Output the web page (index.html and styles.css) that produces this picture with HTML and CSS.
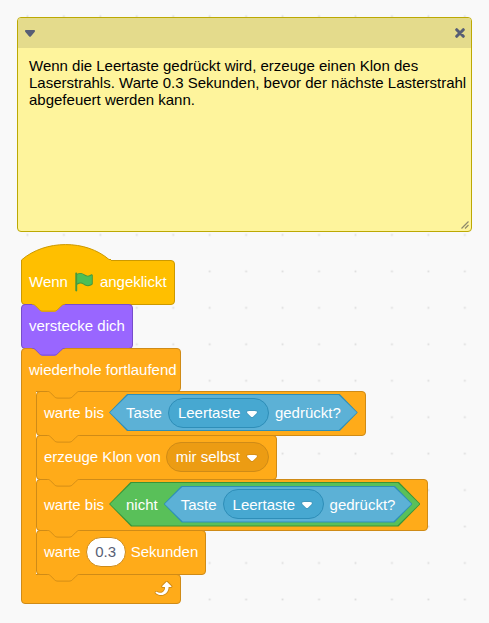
FILE: index.html
```html
<!DOCTYPE html>
<html lang="de">
<head>
<meta charset="utf-8">
<meta name="viewport" content="width=device-width, initial-scale=1">
<title>Laserstrahl</title>
<link rel="stylesheet" href="styles.css">
</head>
<body>
<svg class="grid-dots" aria-hidden="true">
  <defs>
    <pattern id="dots" width="40" height="40" patternUnits="userSpaceOnUse" patternTransform="translate(9.2 -2) scale(.9113)">
      <rect x="19" y="19" width="2" height="2" fill="#ddd"/>
    </pattern>
  </defs>
  <rect width="100%" height="100%" fill="url(#dots)"/>
</svg>
<svg class="defs" aria-hidden="true">
  <symbol id="notch" viewBox="0 0 36 10">
    <path class="notch-fill" d="M0 0v.6c2 0 3 1 4 2l4 4c1 1 2 2 4 2h12c2 0 3-1 4-2l4-4c1-1 2-2 4-2v-.6z"/>
    <path class="notch-line" d="M0 .4c2 0 3 1 4 2l4 4c1 1 2 1.500 4 1.500h12c2 0 3-.5 4-1.500l4-4c1-1 2-2 4-2"/>
  </symbol>
  <symbol id="caret" viewBox="0 0 12.71 8.79">
    <path d="M12.71 2.44A2.41 2.41 0 0 1 12 4.16L8.08 8.08a2.45 2.45 0 0 1-3.45 0L.72 4.16A2.42 2.42 0 0 1 0 2.44 2.48 2.48 0 0 1 .71.71C1 .47 1.43 0 6.36 0S11.75.46 12 .71A2.44 2.44 0 0 1 12.71 2.44Z" fill="#231f20" opacity=".1"/>
    <path d="M6.36 7.79a1.43 1.43 0 0 1-1-.42L1.42 3.45a1.44 1.44 0 0 1 0-2c.56-.56 9.31-.56 9.87 0a1.44 1.44 0 0 1 0 2L7.37 7.37A1.43 1.43 0 0 1 6.36 7.79Z" fill="#fff"/>
  </symbol>
</svg>
<main class="workspace">
  <section class="note">
    <header class="note-bar">
      <button class="note-button" type="button" aria-label="Kommentar einklappen">
        <svg width="10" height="7" viewBox="0 0 10 7"><path d="M1 0h8c1 0 1.300 1.200.6 1.900L6 6.200c-.6.700-1.400.700-2 0L.4 1.900C-.3 1.200 0 0 1 0z" fill="#575e75"/></svg>
      </button>
      <button class="note-button" type="button" aria-label="Kommentar löschen">
        <svg width="10" height="10" viewBox="0 0 10 10"><path d="M1.700 1.700l6.600 6.600M8.300 1.700L1.700 8.300" stroke="#575e75" stroke-width="3" stroke-linecap="round"/></svg>
      </button>
    </header>
    <textarea class="note-text" aria-label="Kommentar" spellcheck="false">Wenn die Leertaste gedrückt wird, erzeuge einen Klon des Laserstrahls. Warte 0.3 Sekunden, bevor der nächste Lasterstrahl abgefeuert werden kann.</textarea>
    <svg class="note-grip" width="8" height="8" viewBox="0 0 8 8" aria-hidden="true"><path d="M.5 7.500l7-7M4 7.500L7.500 4" stroke="#8f8a6a" stroke-width="1.200"/></svg>
  </section>

  <section class="script">
    <div class="hat">
      <svg class="hat-dome" width="90" height="17" viewBox="0 0 90 17" aria-hidden="true"><path d="M.5 17v-1C24-4.500 65-4.500 88 15.500h2V17z" fill="#ffbf00"/><path d="M.5 17v-1C24-4.500 65-4.500 88 15.500h2" fill="none" stroke="#c90"/></svg>
      <div class="block events">
        <span>Wenn</span>
        <svg class="flag" width="22" height="22" viewBox="0 0 24 24" role="img" aria-label="grüne Flagge">
          <path fill="#45993d" d="M20.800 3.700c-.4-.2-.9-.1-1.200.2-2 1.600-4.800 1.600-6.800 0-2.300-1.900-5.600-2.300-8.300-1v-.4c0-.6-.5-1-1-1s-1 .4-1 1v18.800c0 .5.5 1 1 1h.1c.5 0 1-.4 1-1v-6.400c1-.7 2.100-1.200 3.400-1.300 1.200 0 2.400.4 3.400 1.200 2.900 2.300 7 2.300 9.800 0 .3-.2.4-.5.4-.9V4.700c0-.5-.3-.9-.8-1z"/>
          <path fill="#4cbf56" d="M20.600 4.800l-.1 9.100v.1c-2.500 2-6.100 2-8.600 0-1.100-.9-2.500-1.400-4-1.400-1.200.1-2.300.5-3.400 1.100V4c2.500-1.400 5.500-1.100 7.700.6 2.400 1.900 5.700 1.900 8.100 0h.2c0 .1.100.1.100.2z"/>
        </svg>
        <span>angeklickt</span>
        <svg class="notch" aria-hidden="true"><use href="#notch"/></svg>
      </div>
    </div>

    <div class="block looks">
      <span>verstecke dich</span>
      <svg class="notch" aria-hidden="true"><use href="#notch"/></svg>
    </div>

    <div class="loop">
      <div class="block control loop-head"><span>wiederhole fortlaufend</span></div>
      <div class="loop-body">
        <div class="loop-arm"></div>
        <div class="loop-blocks">
          <div class="block control">
            <span>warte bis</span>
            <div class="hex sensing">
              <label for="key1">Taste</label>
              <span class="pick"><select id="key1"><option>Leertaste</option></select><svg class="caret" aria-hidden="true"><use href="#caret"/></svg></span>
              <span>gedrückt?</span>
            </div>
            <svg class="notch" aria-hidden="true"><use href="#notch"/></svg>
          </div>
          <div class="block control">
            <label for="clone">erzeuge Klon von</label>
            <span class="pick"><select id="clone"><option>mir selbst</option></select><svg class="caret" aria-hidden="true"><use href="#caret"/></svg></span>
            <svg class="notch" aria-hidden="true"><use href="#notch"/></svg>
          </div>
          <div class="block control tall">
            <span>warte bis</span>
            <div class="hex operators">
              <span>nicht</span>
              <div class="hex sensing">
                <label for="key2">Taste</label>
                <span class="pick"><select id="key2"><option>Leertaste</option></select><svg class="caret" aria-hidden="true"><use href="#caret"/></svg></span>
                <span>gedrückt?</span>
              </div>
            </div>
            <svg class="notch" aria-hidden="true"><use href="#notch"/></svg>
          </div>
          <div class="block control">
            <label for="secs">warte</label>
            <input class="number" id="secs" type="text" value="0.3">
            <span>Sekunden</span>
            <svg class="notch" aria-hidden="true"><use href="#notch"/></svg>
          </div>
          <svg class="notch top-notch control" aria-hidden="true"><use href="#notch"/></svg>
        </div>
      </div>
      <div class="block control loop-foot">
        <svg width="22" height="22" viewBox="0 0 24 24" aria-hidden="true">
          <path fill="#cf8b17" d="M23.300 11c-.3.6-.9 1-1.500 1h-1.600c-.1 1.300-.5 2.500-1.100 3.600-.9 1.700-2.300 3.200-4.100 4.100-1.700.9-3.600 1.200-5.500.9-1.800-.3-3.500-1.100-4.900-2.300-.7-.7-.7-1.900 0-2.600.6-.6 1.600-.7 2.300-.2H7c.9.6 1.900.9 2.900.9s1.900-.3 2.700-.9c1.100-.8 1.800-2.100 1.800-3.500h-1.500c-.9 0-1.700-.7-1.700-1.700 0-.4.2-.9.5-1.200l4.400-4.400c.7-.6 1.700-.6 2.400 0L23 9.200c.5.5.6 1.200.3 1.800z"/>
          <path fill="#fff" d="M21.800 11h-2.600c0 1.500-.3 2.900-1 4.200-.8 1.600-2.100 2.800-3.700 3.600-1.500.8-3.300 1.100-4.900.8-1.600-.2-3.200-1-4.400-2.100-.4-.3-.4-.9-.1-1.200.3-.4.9-.4 1.200-.1 1 .7 2.200 1.100 3.400 1.100s2.300-.3 3.300-1c.9-.6 1.600-1.500 2-2.600.3-.9.4-1.800.2-2.800h-2.400c-.4 0-.7-.3-.7-.7 0-.2.1-.3.2-.4l4.400-4.400c.3-.3.7-.3.9 0L22 9.800c.3.3.4.6.3.9s-.3.3-.5.3z"/>
        </svg>
      </div>
    </div>
  </section>
</main>
</body>
</html>
```
FILE: styles.css
```css
* {
  box-sizing: border-box;
}

body {
  margin: 0;
  min-height: 100vh;
  background: #f9f9f9;
  color: #fff;
  font: 15px/17px "Liberation Sans", Arial, sans-serif;
}

input,
select,
textarea,
button {
  margin: 0;
  font: inherit;
}

.grid-dots {
  position: absolute;
  inset: 0;
  width: 100%;
  height: 100%;
}

.defs {
  position: absolute;
  width: 0;
  height: 0;
}

.workspace {
  position: relative;
  padding: 17px 17px 20px;
}

/* Comment */
.note {
  position: relative;
  display: flex;
  flex-direction: column;
  height: 215px;
  overflow: hidden;
  border: 1px solid #bca903;
  border-radius: 4px;
  background: #fef49c;
}

.note-bar {
  display: flex;
  justify-content: space-between;
  align-items: center;
  height: 30px;
  padding: 0 5px 0 6px;
  background: #e4db8c;
}

.note-button {
  display: grid;
  place-items: center;
  width: 12px;
  height: 16px;
  padding: 0;
  border: 0;
  background: none;
}

.note-text {
  flex: 1;
  padding: 9px 0 9px 11px;
  border: 0;
  outline: 0;
  resize: none;
  overflow: hidden;
  background: none;
  color: #000;
}

.note-grip {
  position: absolute;
  right: 2px;
  bottom: 2px;
}

/* Blocks */
.script {
  display: flex;
  flex-direction: column;
  align-items: flex-start;
  margin: 12px 4px 0;
}

.hat {
  display: flex;
  flex-direction: column;
  align-items: flex-start;
}

.hat-dome {
  position: relative;
  z-index: 1;
  margin-bottom: -1px;
}

.hat .block {
  border-top-left-radius: 0;
}

.events {
  --fill: #ffbf00;
  --line: #c90;
}

.looks {
  --fill: #96f;
  --line: #774dcb;
}

.control {
  --fill: #ffab19;
  --line: #cf8b17;
  --field: #ec9c13;
}

.sensing {
  --fill: #5cb1d6;
  --line: #2e8eb8;
  --field: #47a8d1;
}

.operators {
  --fill: #59c059;
  --line: #389438;
}

.block {
  position: relative;
  display: flex;
  align-items: center;
  gap: 5px;
  width: max-content;
  height: 45px;
  padding: 0 7px 2px;
  border: 1px solid var(--line);
  border-radius: 4px;
  background: var(--fill);
  white-space: nowrap;
}

.tall {
  height: 52px;
}

.looks,
.loop,
.loop-blocks .block + .block {
  margin-top: -1px;
}

.notch {
  position: absolute;
  z-index: 2;
  top: 100%;
  left: 10px;
  width: 33px;
  height: 9px;
}

.top-notch {
  top: 0;
  left: 26px;
}

.notch-fill {
  fill: var(--fill);
}

.notch-line {
  fill: none;
  stroke: var(--line);
}

.loop-head,
.loop-foot {
  width: 160px;
}

.loop-head {
  height: 44px;
  border-bottom-left-radius: 0;
}

.loop-body {
  position: relative;
  z-index: 1;
  display: flex;
  margin: -1px 0;
}

.loop-arm {
  width: 15px;
  border-left: 1px solid #cf8b17;
  background: #ffab19;
}

.loop-foot {
  justify-content: flex-end;
  height: 30px;
  border-top-left-radius: 0;
}

/* Reporter slots */
.hex {
  --slope: 18px;
  position: relative;
  z-index: 0;
  display: flex;
  align-items: center;
  gap: 6px;
  height: 37px;
  padding: 0 17px;
}

.hex.operators {
  --slope: 22px;
  height: 45px;
  padding-right: 8px;
}

.hex::before,
.hex::after {
  content: "";
  position: absolute;
  z-index: -1;
  inset: 0;
  background: var(--line);
  clip-path: polygon(0 50%, var(--slope) 0, calc(100% - var(--slope)) 0, 100% 50%, calc(100% - var(--slope)) 100%, var(--slope) 100%);
}

.hex::after {
  inset: 1px;
  background: var(--fill);
}

.pick {
  position: relative;
  display: flex;
}

.pick select {
  appearance: none;
  height: 30px;
  padding: 0 27px 0 9px;
  border: 1px solid var(--line);
  border-radius: 15px;
  outline: 0;
  background: var(--field);
  color: #fff;
}

.caret {
  position: absolute;
  top: 12px;
  right: 11px;
  width: 12px;
  height: 8px;
  pointer-events: none;
}

.number {
  width: 40px;
  height: 30px;
  padding: 0;
  border: 1px solid #cf8b17;
  border-radius: 15px;
  outline: 0;
  background: #fff;
  color: #575e75;
  text-align: center;
}
```
